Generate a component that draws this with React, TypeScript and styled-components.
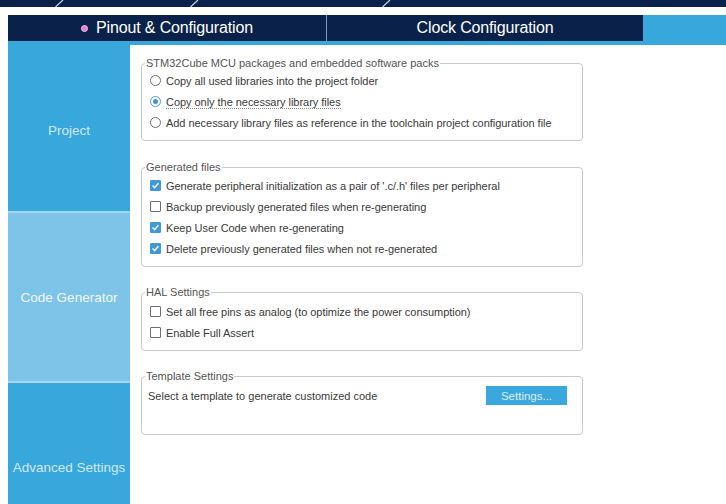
import React from "react";
import styled, { createGlobalStyle } from "styled-components";

const GlobalStyle = createGlobalStyle`
  html, body { margin: 0; padding: 0; background: #ffffff; overflow: hidden; }
  body { font-family: "Liberation Sans", Arial, sans-serif; }
  * { box-sizing: border-box; }
`;

const NAVY = "#0a2249";
const BLUE = "#38a8dc";
const LIGHT_BLUE = "#7ec4e8";

const Page = styled.div`
  width: 726px;
  height: 504px;
  display: flex;
  flex-direction: column;
  overflow: hidden;
`;

const TopBand = styled.div`
  height: 7px;
  flex: none;
  background: ${NAVY};
  display: flex;
  align-items: stretch;
`;

const Crumb = styled.div<{ $w: number }>`
  width: ${(p) => p.$w}px;
  flex: none;
`;

const SlashIcon = () => (
  <svg width="9" height="7" viewBox="0 0 9 7" style={{ display: "block", flex: "none" }}>
    <line x1="0.5" y1="7" x2="8" y2="0" stroke="#d6dde8" strokeWidth="1.1" />
  </svg>
);

const Frame = styled.div`
  flex: 1;
  display: flex;
  flex-direction: column;
  padding: 8px 0 0 8px;
  min-height: 0;
`;

const TabBar = styled.div`
  height: 26px;
  flex: none;
  display: flex;
  background: ${BLUE};
`;

const Tab = styled.div<{ $w: number }>`
  width: ${(p) => p.$w}px;
  flex: none;
  background: ${NAVY};
  color: #ffffff;
  font-size: 16px;
  display: flex;
  align-items: center;
  justify-content: center;
  gap: 8px;
  letter-spacing: -0.15px;
`;

const TabDivider = styled.div`
  width: 1px;
  flex: none;
  background: #8597b3;
`;

const Dot = styled.span`
  width: 7px;
  height: 7px;
  border-radius: 50%;
  background: #e47fcb;
  border: 1px solid #f4c3e8;
  flex: none;
`;

const Stripe = styled.div`
  height: 4px;
  flex: none;
  background: ${BLUE};
`;

const Main = styled.div`
  flex: 1;
  display: flex;
  min-height: 0;
`;

const Sidebar = styled.div`
  width: 122px;
  flex: none;
  display: flex;
  flex-direction: column;
  gap: 2px;
  background: #a6d7f0;
`;

const SideItem = styled.div<{ $active?: boolean; $h: number; $nudge?: number }>`
  height: ${(p) => p.$h}px;
  flex: none;
  background: ${(p) => (p.$active ? LIGHT_BLUE : BLUE)};
  color: ${(p) => (p.$active ? "rgba(255,255,255,0.92)" : "rgba(236,246,252,0.85)")};
  font-size: 13.5px;
  display: flex;
  align-items: center;
  justify-content: center;
  white-space: nowrap;
  padding-top: ${(p) => p.$nudge ?? 0}px;
`;

const Content = styled.div`
  flex: 1;
  padding: 12px 0 0 11px;
  display: flex;
  flex-direction: column;
  gap: 19px;
`;

const Group = styled.fieldset<{ $padLeft?: number; $padBottom?: number; $padTop?: number; $extraAbove?: number }>`
  width: 442px;
  margin: ${(p) => p.$extraAbove ?? 0}px 0 0 0;
  min-width: 0;
  border: 1px solid #c9c9c9;
  border-radius: 4px;
  padding: ${(p) => p.$padTop ?? 0}px 15px ${(p) => p.$padBottom ?? 7}px ${(p) => p.$padLeft ?? 8}px;
`;

const Legend = styled.legend<{ $shift?: number }>`
  font-size: 11px;
  line-height: 13px;
  color: #555555;
  padding: 0 1px;
  margin-left: ${(p) => p.$shift ?? -5}px;
`;

const Row = styled.div`
  height: 21px;
  display: flex;
  align-items: center;
  gap: 5px;
  font-size: 11px;
  color: #3a3a3a;
  letter-spacing: -0.04px;
`;

const Label = styled.span<{ $focused?: boolean }>`
  line-height: 12px;
  border-bottom: 1px dotted ${(p) => (p.$focused ? "#8a8a8a" : "transparent")};
  padding-top: 1px;
`;

const RadioBox = styled.span<{ $on?: boolean }>`
  width: 11px;
  height: 11px;
  border-radius: 50%;
  flex: none;
  border: 1px solid ${(p) => (p.$on ? "#4f9fd6" : "#6f6f6f")};
  background: #ffffff;
  display: flex;
  align-items: center;
  justify-content: center;
  &::after {
    content: "";
    width: 5px;
    height: 5px;
    border-radius: 50%;
    background: ${(p) => (p.$on ? "#3e95d4" : "transparent")};
  }
`;

const CheckBox = styled.span<{ $on?: boolean }>`
  width: 11px;
  height: 11px;
  flex: none;
  border-radius: 1px;
  border: 1px solid ${(p) => (p.$on ? "#3f98d8" : "#6f6f6f")};
  background: ${(p) => (p.$on ? "#3f98d8" : "#ffffff")};
  display: flex;
  align-items: center;
  justify-content: center;
`;

const CheckMark = () => (
  <svg width="9" height="9" viewBox="0 0 9 9" style={{ display: "block" }}>
    <polyline points="1.6,4.6 3.6,6.6 7.4,2.2" fill="none" stroke="#ffffff" strokeWidth="1.4" />
  </svg>
);

const TemplateRow = styled.div`
  height: 23px;
  display: flex;
  align-items: center;
  justify-content: space-between;
  font-size: 11px;
  color: #3a3a3a;
`;

const Button = styled.button`
  width: 81px;
  height: 19px;
  border: none;
  background: #3aa8de;
  color: #dcedf8;
  font-family: "Liberation Sans", Arial, sans-serif;
  font-size: 11.5px;
  padding: 0;
`;

const Radio = ({ on, focused, children }: { on?: boolean; focused?: boolean; children: React.ReactNode }) => (
  <Row>
    <RadioBox $on={on} />
    <Label $focused={focused}>{children}</Label>
  </Row>
);

const Check = ({ on, children }: { on?: boolean; children: React.ReactNode }) => (
  <Row>
    <CheckBox $on={on}>{on && <CheckMark />}</CheckBox>
    <Label>{children}</Label>
  </Row>
);

export default function App() {
  return (
    <>
      <GlobalStyle />
      <Page>
        <TopBand>
          <Crumb $w={55} />
          <SlashIcon />
          <Crumb $w={126} />
          <SlashIcon />
          <Crumb $w={183} />
          <SlashIcon />
        </TopBand>
        <Frame>
          <TabBar>
            <Tab $w={318}>
              <Dot />
              Pinout &amp; Configuration
            </Tab>
            <TabDivider />
            <Tab $w={316}>Clock Configuration</Tab>
          </TabBar>
          <Stripe />
          <Main>
            <Sidebar>
              <SideItem $h={166} $nudge={4}>
                Project
              </SideItem>
              <SideItem $h={168} $active>
                Code Generator
              </SideItem>
              <SideItem $h={168}>Advanced Settings</SideItem>
            </Sidebar>
            <Content>
              <Group>
                <Legend>STM32Cube MCU packages and embedded software packs</Legend>
                <Radio>Copy all used libraries into the project folder</Radio>
                <Radio on focused>
                  Copy only the necessary library files
                </Radio>
                <Radio>Add necessary library files as reference in the toolchain project configuration file</Radio>
              </Group>
              <Group $padTop={1} $extraAbove={1}>
                <Legend>Generated files</Legend>
                <Check on>Generate peripheral initialization as a pair of '.c/.h' files per peripheral</Check>
                <Check>Backup previously generated files when re-generating</Check>
                <Check on>Keep User Code when re-generating</Check>
                <Check on>Delete previously generated files when not re-generated</Check>
              </Group>
              <Group $padTop={2} $padBottom={7}>
                <Legend>HAL Settings</Legend>
                <Check>Set all free pins as analog (to optimize the power consumption)</Check>
                <Check>Enable Full Assert</Check>
              </Group>
              <Group $padTop={1} $padLeft={6} $padBottom={27}>
                <Legend $shift={-3}>Template Settings</Legend>
                <TemplateRow>
                  <span>Select a template to generate customized code</span>
                  <Button>Settings...</Button>
                </TemplateRow>
              </Group>
            </Content>
          </Main>
        </Frame>
      </Page>
    </>
  );
}
